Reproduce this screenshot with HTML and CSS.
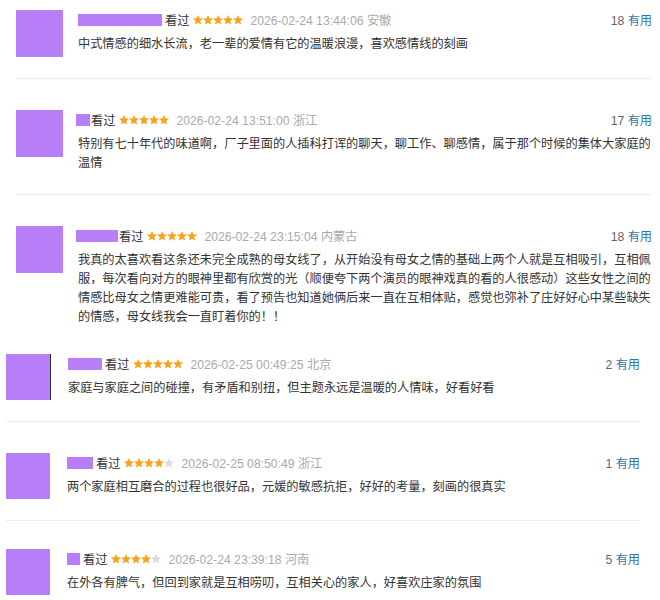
FILE: index.html
```html
<!DOCTYPE html>
<html lang="zh-CN">
<head>
  <meta charset="UTF-8">
  <meta name="viewport" content="width=device-width, initial-scale=1.0">
  <title>短评</title>
  <link rel="stylesheet" href="styles.css">
</head>
<body>
  <svg class="defs" width="0" height="0">
    <symbol id="star" viewBox="0 0 10 10">
      <polygon points="5,0 6.4,3.3 10,3.6 7.3,6 8.1,9.6 5,7.7 1.9,9.6 2.7,6 0,3.6 3.6,3.3"/>
    </symbol>
  </svg>

  <section class="group group-a">
    <div class="comment">
      <div class="avatar"></div>
      <div class="body">
        <div class="info">
          <span class="name" style="width:84px"></span>
          <span class="watched">看过</span>
          <span class="stars">
            <svg class="on"><use href="#star"/></svg><svg class="on"><use href="#star"/></svg><svg class="on"><use href="#star"/></svg><svg class="on"><use href="#star"/></svg><svg class="on"><use href="#star"/></svg>
          </span>
          <span class="time">2026-02-24 13:44:06 安徽</span>
          <span class="votes"><span class="count">18</span> <a href="#">有用</a></span>
        </div>
        <p class="text">中式情感的细水长流，老一辈的爱情有它的温暖浪漫，喜欢感情线的刻画</p>
      </div>
    </div>

    <div class="comment">
      <div class="avatar"></div>
      <div class="body">
        <div class="info">
          <span class="name name-tight" style="width:14px"></span>
          <span class="watched">看过</span>
          <span class="stars">
            <svg class="on"><use href="#star"/></svg><svg class="on"><use href="#star"/></svg><svg class="on"><use href="#star"/></svg><svg class="on"><use href="#star"/></svg><svg class="on"><use href="#star"/></svg>
          </span>
          <span class="time">2026-02-24 13:51:00 浙江</span>
          <span class="votes"><span class="count">17</span> <a href="#">有用</a></span>
        </div>
        <p class="text">特别有七十年代的味道啊，厂子里面的人插科打诨的聊天，聊工作、聊感情，属于那个时候的集体大家庭的温情</p>
      </div>
    </div>

    <div class="comment">
      <div class="avatar"></div>
      <div class="body">
        <div class="info">
          <span class="name name-tight" style="width:42px"></span>
          <span class="watched">看过</span>
          <span class="stars">
            <svg class="on"><use href="#star"/></svg><svg class="on"><use href="#star"/></svg><svg class="on"><use href="#star"/></svg><svg class="on"><use href="#star"/></svg><svg class="on"><use href="#star"/></svg>
          </span>
          <span class="time">2026-02-24 23:15:04 内蒙古</span>
          <span class="votes"><span class="count">18</span> <a href="#">有用</a></span>
        </div>
        <p class="text">我真的太喜欢看这条还未完全成熟的母女线了，从开始没有母女之情的基础上两个人就是互相吸引，互相佩服，每次看向对方的眼神里都有欣赏的光（顺便夸下两个演员的眼神戏真的看的人很感动）这些女性之间的情感比母女之情更难能可贵，看了预告也知道她俩后来一直在互相体贴，感觉也弥补了庄好好心中某些缺失的情感，母女线我会一直盯着你的！！</p>
      </div>
    </div>
  </section>

  <section class="group group-b">
    <div class="comment">
      <div class="avatar avatar-edge"></div>
      <div class="body">
        <div class="info">
          <span class="name" style="width:34px"></span>
          <span class="watched">看过</span>
          <span class="stars">
            <svg class="on"><use href="#star"/></svg><svg class="on"><use href="#star"/></svg><svg class="on"><use href="#star"/></svg><svg class="on"><use href="#star"/></svg><svg class="on"><use href="#star"/></svg>
          </span>
          <span class="time">2026-02-25 00:49:25 北京</span>
          <span class="votes"><span class="count">2</span> <a href="#">有用</a></span>
        </div>
        <p class="text">家庭与家庭之间的碰撞，有矛盾和别扭，但主题永远是温暖的人情味，好看好看</p>
      </div>
    </div>

    <div class="comment">
      <div class="avatar"></div>
      <div class="body">
        <div class="info">
          <span class="name" style="width:26px"></span>
          <span class="watched">看过</span>
          <span class="stars">
            <svg class="on"><use href="#star"/></svg><svg class="on"><use href="#star"/></svg><svg class="on"><use href="#star"/></svg><svg class="on"><use href="#star"/></svg><svg class="off"><use href="#star"/></svg>
          </span>
          <span class="time">2026-02-25 08:50:49 浙江</span>
          <span class="votes"><span class="count">1</span> <a href="#">有用</a></span>
        </div>
        <p class="text">两个家庭相互磨合的过程也很好品，元媛的敏感抗拒，好好的考量，刻画的很真实</p>
      </div>
    </div>

    <div class="comment">
      <div class="avatar"></div>
      <div class="body">
        <div class="info">
          <span class="name" style="width:13px"></span>
          <span class="watched">看过</span>
          <span class="stars">
            <svg class="on"><use href="#star"/></svg><svg class="on"><use href="#star"/></svg><svg class="on"><use href="#star"/></svg><svg class="on"><use href="#star"/></svg><svg class="off"><use href="#star"/></svg>
          </span>
          <span class="time">2026-02-24 23:39:18 河南</span>
          <span class="votes"><span class="count">5</span> <a href="#">有用</a></span>
        </div>
        <p class="text">在外各有脾气，但回到家就是互相唠叨，互相关心的家人，好喜欢庄家的氛围</p>
      </div>
    </div>
  </section>
</body>
</html>
```

FILE: styles.css
```css
body {
  font-family: "Liberation Sans", "Noto Sans CJK SC", sans-serif;
  font-size: 12.2px;
  margin: 0;
  padding: 0;
  background-color: #fff;
  color: #333;
}

.defs {
  position: absolute;
}

.group-a {
  margin-left: 16px;
  width: 636px;
}

.group-b {
  margin-left: 6px;
  width: 634px;
}

.comment {
  display: flex;
  padding: 31px 0 21px;
  border-bottom: 1px solid #ececec;
}

.group-a .comment:first-child {
  padding-top: 10px;
}

.group-a .comment:last-child {
  border-bottom: none;
}

.group-b .comment:first-child {
  padding-top: 6px;
}

.group-b .comment:last-child {
  padding-top: 28px;
  border-bottom: none;
}

.avatar {
  flex: none;
  width: 47px;
  height: 47px;
  margin-right: 15px;
  background-color: #b77ef7;
}

.group-b .avatar {
  width: 44px;
  height: 46px;
  margin-right: 17px;
}

.avatar-edge {
  border-right: 1px solid #333;
}

.body {
  flex: 1;
  min-width: 0;
}

.info {
  display: flex;
  align-items: center;
  height: 20px;
  white-space: nowrap;
}

.name {
  display: inline-block;
  height: 12px;
  margin-right: 3px;
  background-color: #b77ef7;
}

.name-tight {
  margin-left: -2px;
  margin-right: 1px;
}

.watched {
  color: #333;
  margin-right: 4px;
}

.stars {
  display: inline-flex;
  margin-right: 7px;
}

.stars svg {
  width: 10px;
  height: 10px;
}

.stars .on {
  fill: #f9a21b;
}

.stars .off {
  fill: #dcdcdc;
}

.time {
  color: #aaa;
}

.votes {
  margin-left: auto;
  color: #666;
}

.votes a {
  color: #3377aa;
  text-decoration: none;
}

.text {
  margin: 5px 0 0;
  line-height: 19px;
  color: #333;
}
```
